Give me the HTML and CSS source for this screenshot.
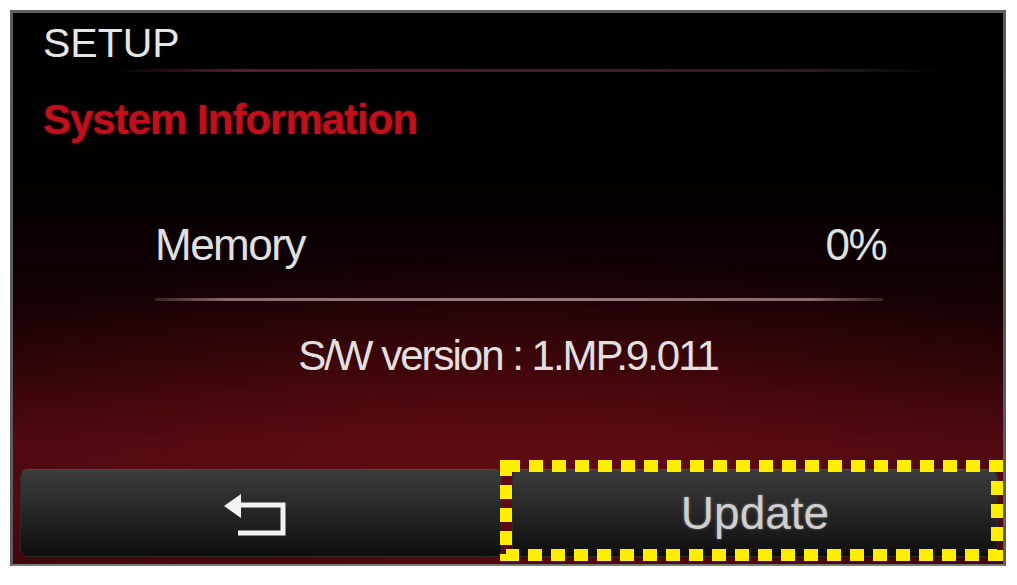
FILE: index.html
```html
<!DOCTYPE html>
<html lang="en">
<head>
    <meta charset="UTF-8">
    <meta name="viewport" content="width=device-width, initial-scale=1.0">
    <title>SETUP - System Information</title>
    <link rel="stylesheet" href="styles.css">
</head>
<body>
    <div class="screen">
        <h1 class="title">SETUP</h1>
        <div class="rule"></div>
        <h2 class="section">System Information</h2>

        <div class="memory">
            <span>Memory</span>
            <span>0%</span>
        </div>
        <div class="memory-line"></div>
        <p class="version">S/W version : 1.MP.9.011</p>

        <div class="buttons">
            <button class="btn back" aria-label="Back">
                <svg width="70" height="56" viewBox="0 0 70 56">
                    <polygon points="4,21 21,9 21,33" fill="#f2f2f2"/>
                    <path d="M18 20 H63 V48 H18" fill="none" stroke="#f2f2f2" stroke-width="5"/>
                </svg>
            </button>
            <button class="btn update">Update</button>
        </div>

        <!-- highlight box drawn over the Update button -->
        <svg class="highlight" width="503" height="101" viewBox="0 0 503 101">
            <rect x="6" y="6" width="491" height="89" fill="none" stroke="#ffee00" stroke-width="12" stroke-dasharray="14 9"/>
        </svg>
    </div>
</body>
</html>
```

FILE: styles.css
```css
body { margin: 0; background: #fff; font-family: "Liberation Sans", Arial, sans-serif; }

.screen {
    position: relative;
    margin: 10px 0 0 10px;
    width: 990px;
    height: 551px;
    border: 3px solid #5c5c5c;
    border-bottom: 2px solid #7a7a7a;
    display: flex;
    flex-direction: column;
    background:
        radial-gradient(ellipse 70% 45% at 50% 88%, rgba(120, 12, 20, 0.55), rgba(120, 12, 20, 0) 100%),
        linear-gradient(#000 0%, #030000 30%, #120103 50%, #2c0407 65%, #480810 78%, #4a0a0e 88%, #36060a 100%);
}

.title {
    margin: 10px 0 0 30px;
    font-size: 41px;
    line-height: 40px;
    font-weight: normal;
    color: #e6e6e6;
}

.rule {
    height: 3px;
    margin: 6px 60px 0 100px;
    background: linear-gradient(90deg, rgba(80, 20, 30, 0), #5a1a26 15%, #4a1a22 55%, #2a1a20 85%, rgba(40, 30, 35, 0));
}

.section {
    margin: 26px 0 0 30px;
    font-size: 42px;
    line-height: 44px;
    letter-spacing: -1px;
    color: #c0101b;
    text-shadow: 0 0 3px rgba(200, 16, 28, 0.6);
}

.memory {
    display: flex;
    justify-content: space-between;
    margin: 81px 117px 0 142px;
    font-size: 44px;
    line-height: 44px;
    letter-spacing: -1.5px;
    color: #e0e0e0;
}

.memory-line {
    height: 3px;
    margin: 31px 120px 0 142px;
    background: linear-gradient(90deg, rgba(140, 110, 115, 0.3), #8a6a6e 10%, #9a7a7e 50%, #8a6a6e 90%, rgba(140, 110, 115, 0.3));
}

.version {
    margin: 33px 0 0;
    text-align: center;
    font-size: 42px;
    line-height: 44px;
    letter-spacing: -2px;
    color: #e4e0e0;
}

.buttons {
    margin-top: auto;
    display: grid;
    grid-template-columns: 482px 1fr;
    gap: 10px;
    padding: 0 5px 7px 7px;
}

.btn {
    height: 88px;
    border: 1px solid #2a2a2a;
    border-top-color: #4a4a4a;
    border-radius: 8px;
    background: linear-gradient(#3c3c3c 0%, #2a2a2a 40%, #1a1a1a 75%, #0e0e0e 100%);
    display: flex;
    align-items: center;
    justify-content: center;
    padding: 0;
}

.back svg { margin-left: -12px; }

.update {
    font-family: "Liberation Sans", Arial, sans-serif;
    font-size: 46px;
    color: #cfcfcf;
    text-shadow: 0 0 3px rgba(255, 255, 255, 0.35);
}

.highlight {
    position: absolute;
    left: 487px;
    top: 447px;
}
```
